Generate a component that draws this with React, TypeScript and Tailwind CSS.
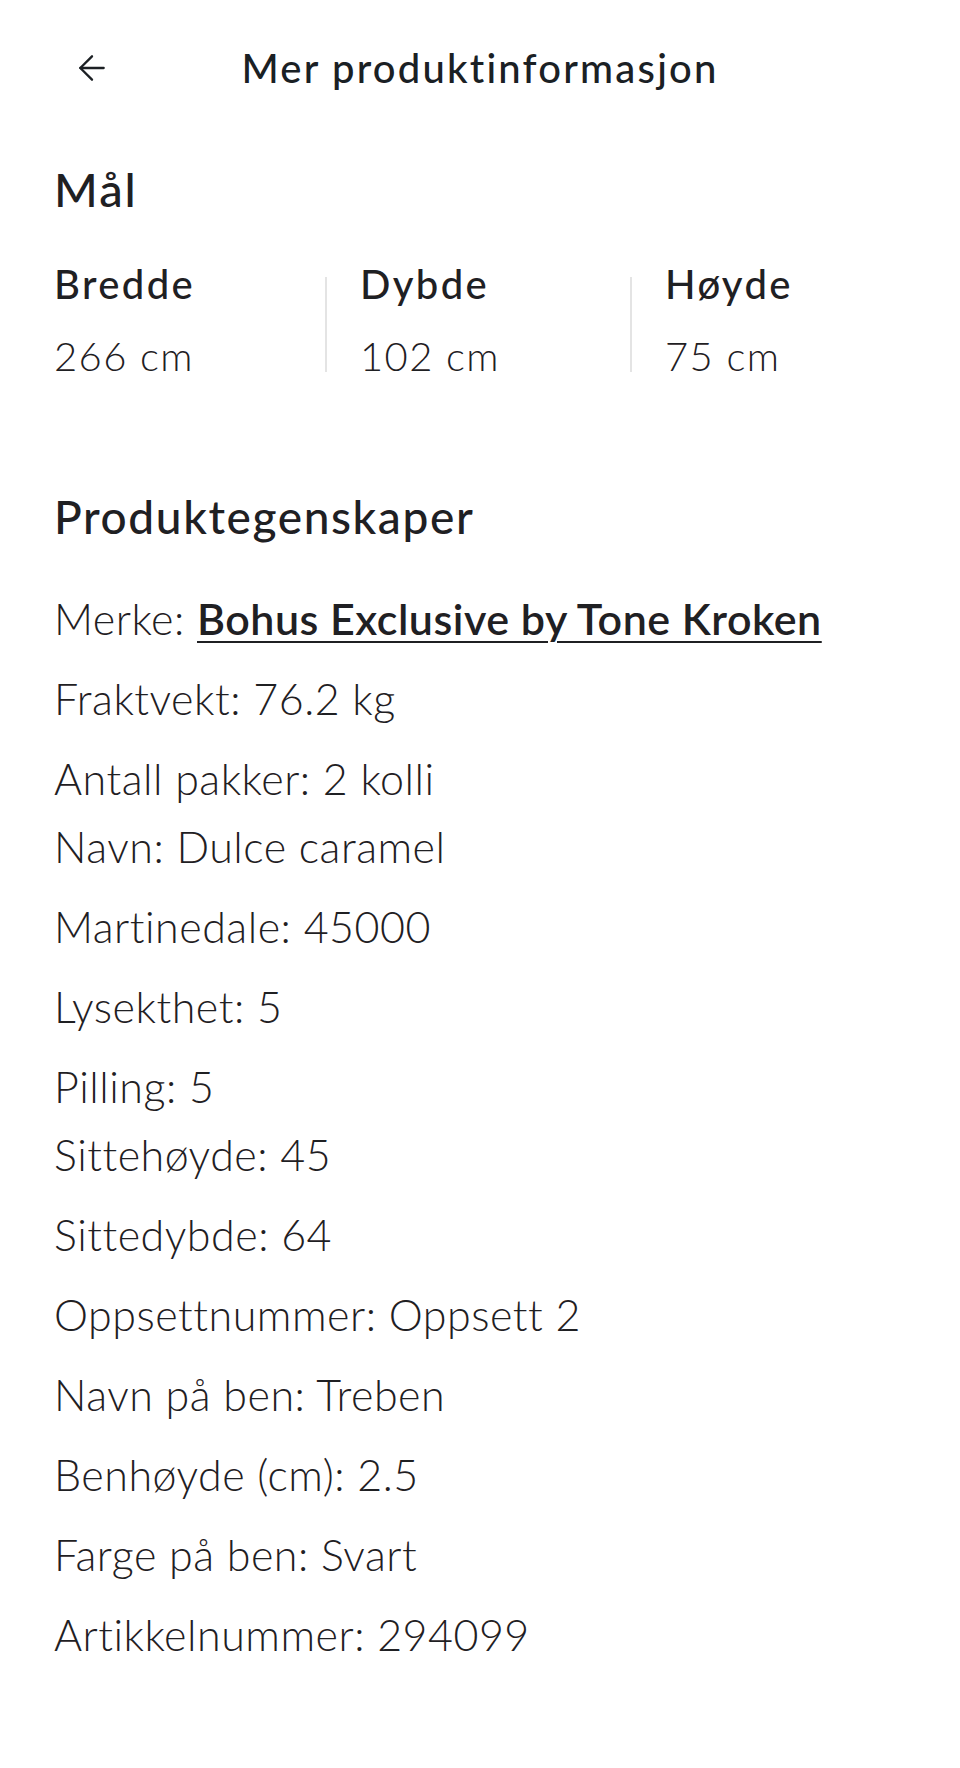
import { ArrowLeft } from "lucide-react"

const groups: { label: string; value: string; link?: boolean }[][] = [
  [
    { label: "Merke", value: "Bohus Exclusive by Tone Kroken", link: true },
    { label: "Fraktvekt", value: "76.2 kg" },
    { label: "Antall pakker", value: "2 kolli" },
  ],
  [
    { label: "Navn", value: "Dulce caramel" },
    { label: "Martinedale", value: "45000" },
    { label: "Lysekthet", value: "5" },
    { label: "Pilling", value: "5" },
  ],
  [
    { label: "Sittehøyde", value: "45" },
    { label: "Sittedybde", value: "64" },
    { label: "Oppsettnummer", value: "Oppsett 2" },
    { label: "Navn på ben", value: "Treben" },
    { label: "Benhøyde (cm)", value: "2.5" },
    { label: "Farge på ben", value: "Svart" },
    { label: "Artikkelnummer", value: "294099" },
  ],
]

const dims = [
  { label: "Bredde", value: "266 cm" },
  { label: "Dybde", value: "102 cm" },
  { label: "Høyde", value: "75 cm" },
]

export default function App() {
  return (
    <div className="min-h-screen bg-white text-[#1f2023] font-['Lato',sans-serif]">
      {/* Header */}
      <header className="grid grid-cols-[1fr_auto_1fr] items-center h-[136px]">
        <button className="justify-self-start ml-[72px] text-[#1c2024]">
          <ArrowLeft size={40} strokeWidth={1.4} />
        </button>
        <h1 className="text-[40px] leading-[1.2] font-medium text-[#1a2024] tracking-[2.2px]">
          Mer produktinformasjon
        </h1>
        <div />
      </header>

      <main className="px-[54px]">
        {/* Mål */}
        <h2 className="mt-[25px] text-[47px] leading-[1.2] font-medium tracking-[2px]">Mål</h2>
        <div className="flex mt-[43px]">
          {dims.map((d, i) => (
            <div key={d.label} className="flex">
              {i > 0 && <div className="w-[2px] h-[95px] mt-[17px] bg-[#e4e4e4]" />}
              <div className={i === 0 ? "w-[271px]" : i === 1 ? "w-[303px] pl-[33px]" : "pl-[33px]"}>
                <div className="text-[40px] leading-[1.2] font-medium tracking-[2.4px]">{d.label}</div>
                <div className="mt-[24px] text-[40px] leading-[1.2] font-light tracking-[1.4px]">
                  {d.value}
                </div>
              </div>
            </div>
          ))}
        </div>

        {/* Produktegenskaper */}
        <h2 className="mt-[109px] text-[46px] leading-[1.2] font-medium tracking-[1.6px]">
          Produktegenskaper
        </h2>
        <div className="mt-[48px] flex flex-col gap-[16px]">
          {groups.map((g, gi) => (
            <div key={gi} className="flex flex-col gap-[28px]">
              {g.map((item) => (
                <p key={item.label} className="text-[43px] leading-[52px] font-light tracking-[0.5px]">
                  {item.label}:{" "}
                  {item.link ? (
                    <a
                      href="#"
                      className="font-semibold underline decoration-2 underline-offset-[6px]"
                    >
                      {item.value}
                    </a>
                  ) : (
                    item.value
                  )}
                </p>
              ))}
            </div>
          ))}
        </div>
      </main>
    </div>
  )
}
